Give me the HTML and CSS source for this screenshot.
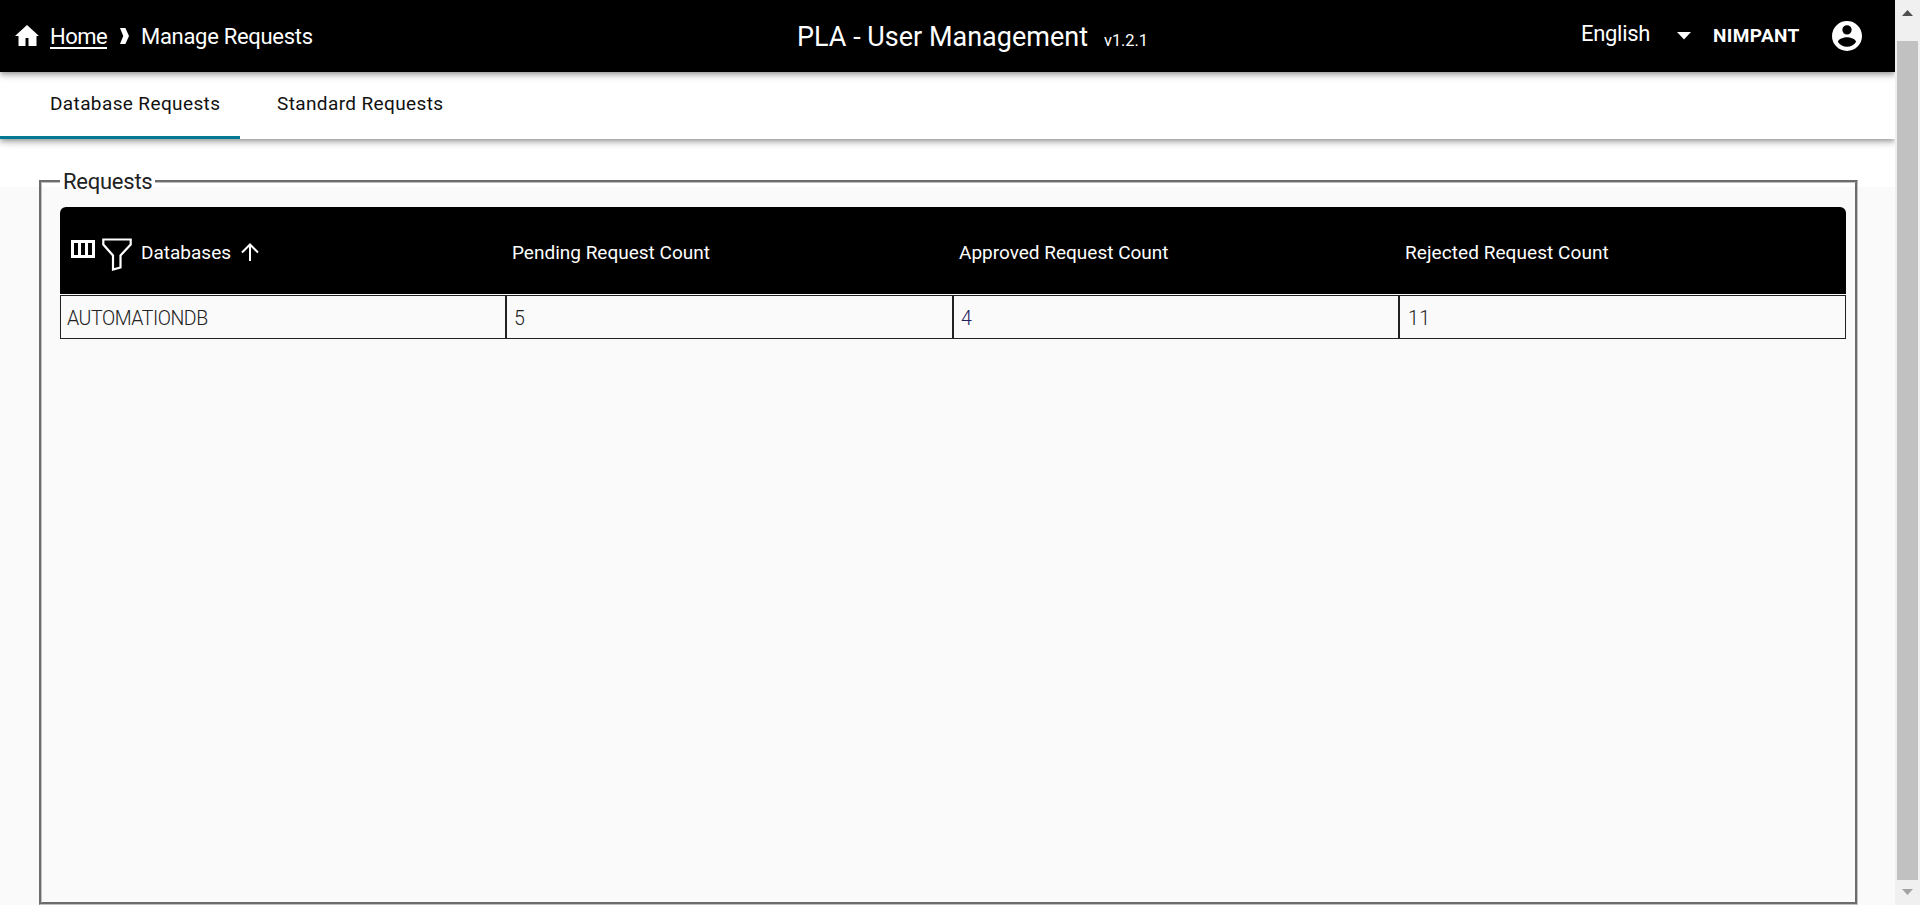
FILE: index.html
```html
<!DOCTYPE html>
<html lang="en">
<head>
<meta charset="utf-8">
<title>PLA - User Management</title>
<link rel="stylesheet" href="styles.css">
</head>
<body>
<div class="page">
  <header class="header">
    <nav class="crumbs">
      <svg class="home-icon" viewBox="0 0 24 21"><path d="M12 0 0 11h3.500v10h7v-8h3v8h8V11H24z" fill="#fff"/></svg>
      <a class="home">Home</a>
      <svg class="chevron" viewBox="0 0 10 18"><path d="M0 0h6l4 9-4 9H0l3.600-9z" fill="#fff"/></svg>
      <span class="current">Manage Requests</span>
    </nav>
    <div class="title"><span class="app">PLA - User Management</span><span class="version">v1.2.1</span></div>
    <div class="tools">
      <span class="language">English</span>
      <svg class="caret" viewBox="0 0 14 8"><path d="M0 0h14L7 7.500z" fill="#fff"/></svg>
      <span class="user">NIMPANT</span>
      <svg class="avatar" viewBox="2 2 20 20"><path fill="#fff" d="M12 2a10 10 0 1 0 0 20 10 10 0 0 0 0-20zm0 2.800a3.100 3.100 0 1 1 0 6.200 3.100 3.100 0 0 1 0-6.200zm0 14.400a7.200 7.200 0 0 1-6-3.220c.03-1.990 4-3.080 6-3.080s5.970 1.090 6 3.080a7.200 7.200 0 0 1-6 3.220z"/></svg>
    </div>
  </header>
  <div class="tabs">
    <div class="tab active"><span>Database Requests</span></div>
    <div class="tab"><span>Standard Requests</span></div>
  </div>
  <main class="main">
    <fieldset class="panel">
      <legend class="legend"><span>Requests</span></legend>
      <div class="thead">
        <div class="th first">
          <svg class="cols-icon" viewBox="0 0 24 18"><path d="M1.500 1.500h21v15h-21zM8.500 1v16M15.500 1v16" fill="none" stroke="#fff" stroke-width="3"/></svg>
          <svg class="filter-icon" viewBox="0 0 30 33"><path d="M1.300 1.500h27.400v5L18.500 17.500v12l-7.500 2V17.500L1.300 6.500z" fill="none" stroke="#fff" stroke-width="2.200"/></svg>
          <span class="h-db">Databases</span>
          <svg class="sort-icon" viewBox="0 0 18 18"><path d="M9 18V1.500M1 9.500l8-8 8 8" fill="none" stroke="#fff" stroke-width="2"/></svg>
        </div>
        <div class="th"><span>Pending Request Count</span></div>
        <div class="th"><span>Approved Request Count</span></div>
        <div class="th"><span class="h-rejected">Rejected Request Count</span></div>
      </div>
      <div class="row">
        <div class="td name">AUTOMATIONDB</div>
        <div class="td">5</div>
        <div class="td link">4</div>
        <div class="td ones">11</div>
      </div>
    </fieldset>
  </main>
</div>
<aside class="scrollbar">
  <svg class="arrow" viewBox="0 0 11 6"><path d="M0 6h11L5.500 0z" fill="#505050"/></svg>
  <div class="thumb"></div>
  <svg class="arrow" viewBox="0 0 11 6"><path d="M0 0h11L5.500 6z" fill="#a3a3a3"/></svg>
</aside>
</body>
</html>
```
FILE: styles.css
```css
* { box-sizing: border-box; }
body { margin: 0; height: 905px; display: flex; overflow: hidden; font-family: Roboto, "Liberation Sans", sans-serif; color: #212121; background: #fafafa; }
svg { display: block; flex: none; }
span, a { white-space: nowrap; }
.page { width: 1895px; height: 905px; overflow: hidden; display: flex; flex-direction: column; background: linear-gradient(#fff 187px, #fafafa 187px); }
.header, .tabs { box-shadow: 0 2px 4px -1px rgba(0,0,0,.2), 0 4px 5px rgba(0,0,0,.14), 0 1px 10px rgba(0,0,0,.2); }
.header { height: 72px; background: #000; color: #fff; display: grid; grid-template-columns: 797px 784px 314px; flex: none; position: relative; z-index: 2; }
.crumbs { display: flex; align-items: center; padding-left: 15px; font-size: 22px; }
.home-icon { width: 24px; height: 21px; margin: 0 11px 1px 0; }
.home { width: 57px; letter-spacing: -.55px; text-decoration: underline; text-decoration-thickness: 2px; text-underline-offset: 3px; }
.chevron { width: 9px; height: 18px; margin: 0 12px 0 13px; }
.current { letter-spacing: -.3px; }
.title { display: flex; align-items: baseline; padding-top: 21px; }
.app { font-size: 27px; width: 307px; }
.version { font-size: 16.5px; letter-spacing: -.1px; }
.tools { display: flex; align-items: center; }
.language { font-size: 22px; letter-spacing: -.3px; width: 96px; padding-bottom: 6px; }
.caret { width: 14px; height: 8px; margin-right: 22px; }
.user { font-size: 19px; font-weight: 700; width: 119px; letter-spacing: .4px; padding-bottom: 2px; }
.avatar { width: 30px; height: 30px; }
.tabs { height: 67px; display: flex; background: #fff; flex: none; position: relative; z-index: 1; }
.tab { width: 240px; padding: 20px 0 0 50px; font-size: 19px; line-height: 24px; color: #111; letter-spacing: .38px; }
.tab + .tab { padding-left: 37px; }
.tab.active { border-bottom: 3px solid #007a93; }
.main { flex: 1; padding: 30px 37px 0 39px; }
.panel { margin: 0; height: 736px; padding: 14px 9px 0 18px; border: 3px groove #c0c0c0; min-width: 0; }
.legend { padding: 0 3px; width: 95px; font-size: 22px; line-height: 26px; height: 24px; letter-spacing: -.25px; }
.thead, .row { display: grid; grid-template-columns: 446px 447px 446px 447px; }
.thead { height: 87px; background: #000; color: #fff; border-radius: 6px 6px 0 0; font-size: 19px; margin-bottom: 1px; }
.th { display: flex; align-items: center; padding: 3px 0 0 6px; }
.first { padding-left: 11px; }
.cols-icon { width: 24px; height: 18px; margin: 0 7px 7px 0; }
.filter-icon { width: 30px; height: 33px; margin: 4px 9px 0 0; }
.h-db { width: 89px; }
.h-rejected { letter-spacing: .07px; }
.sort-icon { width: 18px; height: 18px; margin-left: 10.5px; }
.row { height: 44px; font-size: 19.5px; font-weight: 300; line-height: 45px; }
.td { height: 44px; border: 1px solid #212121; padding-left: 7px; }
.td.name { padding-left: 6px; letter-spacing: -.45px; }
.td.link { color: #21215e; }
.td.ones { padding-left: 8px; letter-spacing: .5px; }
.scrollbar { width: 25px; height: 905px; background: #f0f0f0; display: flex; flex-direction: column; align-items: center; padding: 10px 0; }
.arrow { width: 11px; height: 6px; }
.thumb { width: 21px; height: 839px; margin: 25px 0 9px; background: #c1c1c1; flex: none; }
```
